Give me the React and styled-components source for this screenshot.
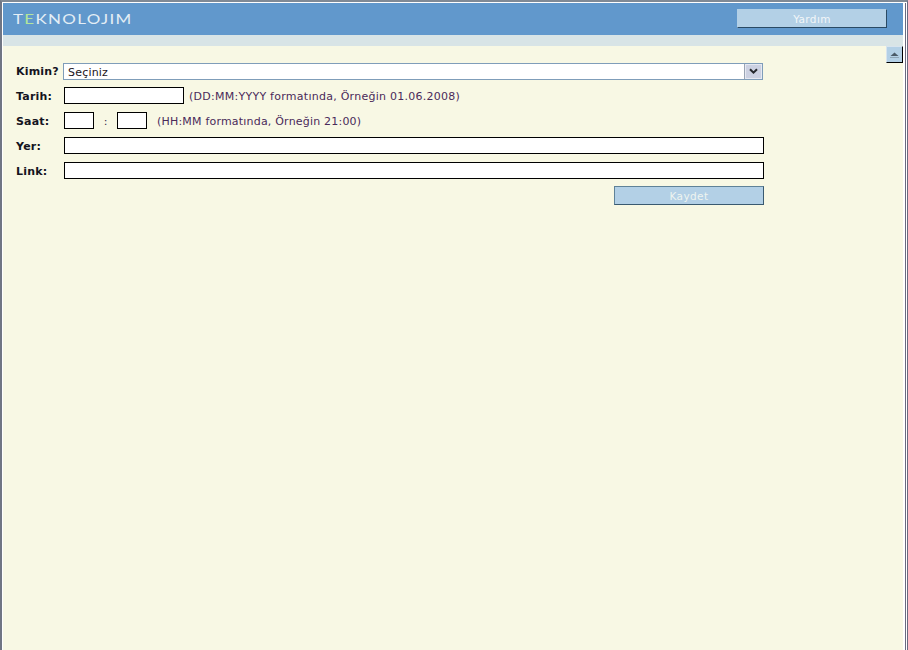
import React from "react";
import styled, { createGlobalStyle } from "styled-components";

const GlobalStyle = createGlobalStyle`
  html, body {
    margin: 0;
    padding: 0;
    height: 100%;
    overflow: hidden;
    background: #f8f8e4;
  }
  * {
    box-sizing: border-box;
  }
`;

const App = () => {
  return (
    <>
      <GlobalStyle />
      <Frame>
        <Inner>
          <Header>
            <Logo>
              T<LogoGreen>E</LogoGreen>KNOLOJIM
            </Logo>
            <HelpButton type="button">Yardım</HelpButton>
          </Header>
          <Strip />
          <Content>
            <ScrollUp type="button" aria-label="Yukarı">
              <svg width="9" height="6" viewBox="0 0 9 6">
                <path d="M4.5 0.5 L8.5 4 L0.5 4 Z" fill="#4a5a68" />
                <path d="M0 5.5 H9" stroke="#8fa6b8" strokeWidth="1" />
              </svg>
            </ScrollUp>
            <Form>
              <SelectRow>
                <SelectLabel>Kimin?</SelectLabel>
                <SelectWrap>
                  <Select defaultValue="">
                    <option value="">Seçiniz</option>
                  </Select>
                  <SelectArrow>
                    <svg width="9" height="7" viewBox="0 0 9 7">
                      <path
                        d="M1 1.2 L4.5 4.7 L8 1.2"
                        fill="none"
                        stroke="#26292e"
                        strokeWidth="2"
                      />
                    </svg>
                  </SelectArrow>
                </SelectWrap>
              </SelectRow>
              <Row>
                <Label>Tarih:</Label>
                <Input $width={120} />
                <Hint $gap={5} $spacing={0.26}>
                  (DD:MM:YYYY formatında, Örneğin 01.06.2008)
                </Hint>
              </Row>
              <Row>
                <Label>Saat:</Label>
                <Input $width={30} />
                <Colon>:</Colon>
                <Input $width={30} />
                <Hint $gap={10} $spacing={0.2}>
                  (HH:MM formatında, Örneğin 21:00)
                </Hint>
              </Row>
              <Row>
                <Label>Yer:</Label>
                <Input $width={700} />
              </Row>
              <Row>
                <Label>Link:</Label>
                <Input $width={700} />
              </Row>
              <SaveRow>
                <SaveButton type="button">Kaydet</SaveButton>
              </SaveRow>
            </Form>
          </Content>
        </Inner>
      </Frame>
    </>
  );
};

export default App;

const Frame = styled.div`
  width: 908px;
  height: 650px;
  border-top: 2px solid #808a96;
  border-left: 2px solid #707684;
  border-right: 1px solid #6a6a80;
  background: #fff;
  padding: 1px 1px 0 1px;
`;

const Inner = styled.div`
  height: 100%;
  display: flex;
  flex-direction: column;
  border-right: 1px solid #6a6a80;
  padding-right: 2px;
`;

const Header = styled.div`
  height: 32px;
  flex: none;
  background: #6198cc;
  display: flex;
  align-items: flex-start;
  justify-content: space-between;
  padding: 6px 16px 0 10px;
`;

const Logo = styled.div`
  font-family: "Lato", "Liberation Sans", sans-serif;
  font-weight: 400;
  font-size: 14px;
  line-height: 19px;
  letter-spacing: 1.1px;
  color: #e4eef5;
  transform: scaleX(1.21);
  transform-origin: left center;
`;

const LogoGreen = styled.span`
  color: #b4e69a;
`;

const HelpButton = styled.button`
  width: 150px;
  height: 19px;
  padding: 0;
  background: #b3d0e6;
  border: 1px solid #b3d0e6;
  border-right-color: #2a4a64;
  border-bottom-color: #2a4a64;
  color: #f2f6f8;
  font-family: "DejaVu Sans", Verdana, sans-serif;
  font-size: 10.5px;
  letter-spacing: 0.4px;
`;

const Strip = styled.div`
  height: 11px;
  flex: none;
  background: #d8e4e6;
`;

const Content = styled.div`
  position: relative;
  flex: 1;
  background: #f8f8e4;
  padding: 17px 0 0 13px;
`;

const ScrollUp = styled.button`
  position: absolute;
  top: 0;
  right: 0;
  width: 17px;
  height: 17px;
  padding: 0;
  display: flex;
  align-items: center;
  justify-content: center;
  background: #b3d0e6;
  border: 1px solid #d8e4ee;
  border-right: 1px solid #000;
  border-bottom: 1px solid #000;
`;

const Form = styled.form`
  display: flex;
  flex-direction: column;
  gap: 8px;
  width: 748px;
`;

const Row = styled.div`
  display: flex;
  align-items: center;
  height: 17px;
`;

const SelectRow = styled(Row)`
  margin-bottom: -1px;
`;

const Label = styled.label`
  flex: none;
  width: 48px;
  padding-top: 1px;
  font-family: "DejaVu Sans", Verdana, sans-serif;
  font-size: 11px;
  font-weight: 700;
  letter-spacing: 0.2px;
  color: #14141e;
  white-space: nowrap;
`;

const SelectLabel = styled(Label)`
  padding-top: 0;
`;

const SelectWrap = styled.div`
  position: relative;
  width: 700px;
  height: 17px;
  margin-left: -1px;
`;

const Select = styled.select`
  display: block;
  width: 100%;
  height: 100%;
  appearance: none;
  border: 1px solid #7f9db9;
  border-radius: 0;
  background: #fff;
  padding: 1px 0 0 4px;
  font-family: "DejaVu Sans", Verdana, sans-serif;
  font-size: 11px;
  letter-spacing: 0.2px;
  color: #1c1420;
  outline: none;
`;

const SelectArrow = styled.span`
  position: absolute;
  top: 1px;
  right: 1px;
  width: 17px;
  height: 15px;
  display: flex;
  align-items: center;
  justify-content: center;
  background: #ccd1e2;
  border: 1px solid #e6e9f2;
  box-shadow: -1px 0 0 #9aa4b4;
  pointer-events: none;
`;

const Input = styled.input`
  flex: none;
  width: ${(p) => p.$width}px;
  height: 17px;
  border: 1px solid #000;
  border-radius: 0;
  background: #fff;
  padding: 0 2px;
  outline: none;
`;

const Hint = styled.span`
  margin-left: ${(p) => p.$gap}px;
  padding-top: 2px;
  font-family: "DejaVu Sans", Verdana, sans-serif;
  font-size: 11px;
  letter-spacing: ${(p) => p.$spacing}px;
  color: #4a2a5a;
  white-space: nowrap;
`;

const Colon = styled.span`
  flex: none;
  width: 23px;
  padding-top: 2px;
  text-align: center;
  font-family: "DejaVu Sans", Verdana, sans-serif;
  font-size: 11px;
  color: #3a2a4a;
`;

const SaveRow = styled.div`
  display: flex;
  justify-content: flex-end;
  margin-top: -1px;
`;

const SaveButton = styled.button`
  width: 150px;
  height: 19px;
  padding: 0;
  background: #b3d0e6;
  border: 1px solid #5f8298;
  border-right-color: #3a5a70;
  border-bottom-color: #3a5a70;
  color: #eef4f0;
  font-family: "DejaVu Sans", Verdana, sans-serif;
  font-size: 10.5px;
  letter-spacing: 0.4px;
`;
